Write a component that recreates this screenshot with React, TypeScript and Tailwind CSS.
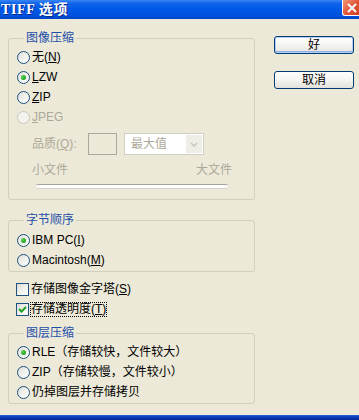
import React from "react";

function Radio({ checked = false, disabled = false }: { checked?: boolean; disabled?: boolean }) {
  return (
    <span
      className={
        disabled
          ? "flex h-[13px] w-[13px] shrink-0 items-center justify-center rounded-full border border-[#CAC8BB] bg-[#F4F3EE]"
          : "flex h-[13px] w-[13px] shrink-0 items-center justify-center rounded-full border border-[#1C5180] bg-[linear-gradient(135deg,#DCDCD7_0%,#F4F4F1_60%,#FFFFFF_100%)]"
      }
    >
      {checked && <span className="h-[5px] w-[5px] rounded-full bg-[radial-gradient(circle_at_35%_35%,#55D451,#21A121_70%)]" />}
    </span>
  );
}

function Checkbox({ checked = false }: { checked?: boolean }) {
  return (
    <span className="flex h-[13px] w-[13px] shrink-0 items-center justify-center border border-[#1C5180] bg-[linear-gradient(135deg,#DCDCD7_0%,#F4F4F1_60%,#FFFFFF_100%)]">
      {checked && (
        <svg width="9" height="9" viewBox="0 0 9 9">
          <path d="M1 4 L3.5 6.5 L8 2" fill="none" stroke="#21A121" strokeWidth="2" />
        </svg>
      )}
    </span>
  );
}

function RadioRow({
  checked,
  disabled,
  children,
}: {
  checked?: boolean;
  disabled?: boolean;
  children: React.ReactNode;
}) {
  return (
    <div className="flex h-[20px] items-center pl-[8px]">
      <Radio checked={checked} disabled={disabled} />
      <span className={disabled ? "ml-[2px] text-[#ACA899]" : "ml-[2px] text-black"}>{children}</span>
    </div>
  );
}

function Legend({ children }: { children: React.ReactNode }) {
  return (
    <span className="absolute left-[15px] top-[-8px] bg-[#ECE9D8] px-[2px] leading-[14px] text-[#1E4FA8]">
      {children}
    </span>
  );
}

export default function App() {
  return (
    <div className="flex h-[420px] w-[359px] flex-col overflow-hidden bg-[#ECE9D8] font-['Liberation_Sans','Noto_Sans_CJK_SC',sans-serif] text-[12px] leading-[14px] text-black">
      {/* Title bar */}
      <div className="flex h-[19px] shrink-0 items-start justify-between overflow-hidden bg-[linear-gradient(to_bottom,#3A86F2_0%,#1064EA_18%,#0058E6_50%,#0052DE_80%,#0043C6_100%)]">
        <span className="ml-[1px] mt-[2px] font-['Liberation_Serif','Noto_Sans_CJK_SC',serif] text-[14px] font-bold leading-[15px] tracking-[0.6px] text-white [text-shadow:1px_1px_0_#0A2A8A]">
          TIFF 选项
        </span>
        <span className="-mr-[4px] flex h-[16px] w-[21px] items-center justify-center rounded-bl-[3px] border-b border-l border-white bg-[linear-gradient(135deg,#F09A7C_0%,#E2583A_45%,#C83A1A_100%)] pr-[3px]">
          <svg width="10" height="10" viewBox="0 0 10 10">
            <path d="M1 1 L9 9 M9 1 L1 9" stroke="white" strokeWidth="2" />
          </svg>
        </span>
      </div>

      {/* Body */}
      <div className="flex flex-1">
        <div className="ml-[8px] flex w-[247px] flex-col">
          {/* 图像压缩 */}
          <div className="relative mt-[19px] h-[162px] rounded-[3px] border border-[#D0D0BF] pt-[8px]">
            <Legend>图像压缩</Legend>
            <RadioRow>
              无(<u>N</u>)
            </RadioRow>
            <RadioRow checked>
              <u>L</u>ZW
            </RadioRow>
            <RadioRow>
              <u>Z</u>IP
            </RadioRow>
            <RadioRow disabled>
              <u>J</u>PEG
            </RadioRow>
            <div className="mt-[6px] flex h-[22px] items-center pl-[23px] text-[#ACA899]">
              <span className="w-[56px]">
                品质(<u>Q</u>):
              </span>
              <span className="h-[22px] w-[29px] border border-[#A8A89C] bg-[#ECE9D8]" />
              <span className="ml-[7px] flex h-[22px] w-[80px] items-center justify-between border border-[#CFCFC4] bg-white pl-[6px] pr-[1px]">
                <span>最大值</span>
                <span className="flex h-[18px] w-[16px] items-center justify-center bg-[#EEEDE6]">
                  <svg width="8" height="5" viewBox="0 0 8 5">
                    <path d="M1 1 L4 4 L7 1" fill="none" stroke="#C9C7BA" strokeWidth="1.5" />
                  </svg>
                </span>
              </span>
            </div>
            <div className="mt-[8px] flex h-[14px] items-center justify-between pl-[23px] pr-[22px] text-[#ACA899]">
              <span>小文件</span>
              <span>大文件</span>
            </div>
            <div className="ml-[27px] mt-[7px] h-[4px] w-[192px] rounded-full border-t border-[#A4A29A] bg-white shadow-[0_1px_0_#D6D4C8]" />
          </div>

          {/* 字节顺序 */}
          <div className="relative mt-[20px] h-[52px] rounded-[3px] border border-[#D0D0BF] pt-[9px]">
            <Legend>字节顺序</Legend>
            <RadioRow checked>
              IBM PC(<u>I</u>)
            </RadioRow>
            <RadioRow>
              Macintosh(<u>M</u>)
            </RadioRow>
          </div>

          {/* Checkboxes */}
          <div className="mt-[7px] flex flex-col">
            <div className="flex h-[20px] items-center pl-[8px]">
              <Checkbox />
              <span className="ml-[2px]">
                存储图像金字塔(<u>S</u>)
              </span>
            </div>
            <div className="flex h-[20px] items-center pl-[8px]">
              <Checkbox checked />
              <span className="ml-[1px] border border-dotted border-black px-[0px] leading-[13px]">
                存储透明度(<u>T</u>)
              </span>
            </div>
          </div>

          {/* 图层压缩 */}
          <div className="relative mt-[14px] h-[71px] rounded-[3px] border border-[#D0D0BF] pt-[8px]">
            <Legend>图层压缩</Legend>
            <RadioRow checked>RLE（存储较快，文件较大）</RadioRow>
            <RadioRow>ZIP（存储较慢，文件较小）</RadioRow>
            <RadioRow>仍掉图层并存储拷贝</RadioRow>
          </div>
        </div>

        {/* Buttons */}
        <div className="ml-[19px] flex flex-col pt-[17px]">
          <button className="flex h-[18px] w-[80px] items-center justify-center rounded-[3px] border border-[#003C74] bg-[linear-gradient(to_bottom,#FFFFFF_0%,#F4F4F0_50%,#E6E5DE_100%)] shadow-[inset_0_0_0_1px_#B7CDF5,inset_0_-1px_0_1px_#8FAEE6] text-black">
            好
          </button>
          <button className="mt-[17px] flex h-[18px] w-[80px] items-center justify-center rounded-[3px] border border-[#003C74] bg-[linear-gradient(to_bottom,#FFFFFF_0%,#F4F4F0_50%,#E2E1DA_100%)] text-black">
            取消
          </button>
        </div>
      </div>

      {/* Bottom window border */}
      <div className="h-[5px] shrink-0 bg-[linear-gradient(to_bottom,#2D63DA_0%,#0C3CB8_40%,#08279A_100%)]" />
    </div>
  );
}
